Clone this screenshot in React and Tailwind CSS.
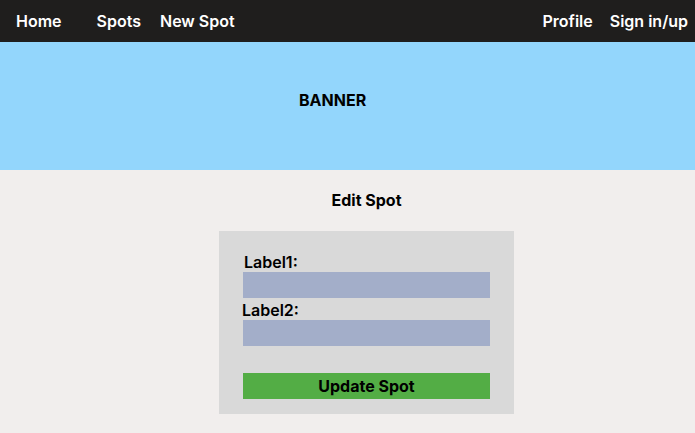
import React from 'react';

const App = () => {
  return (
    <div className="min-h-[433px] bg-[#f1eeed] font-['Inter',sans-serif] text-black">
      <nav className="h-[42px] bg-[#1f1e1d] flex items-center justify-between px-4 text-white font-semibold text-base">
        <div className="flex items-center">
          <a className="mr-[35px]">Home</a>
          <a className="mr-[19px]">Spots</a>
          <a>New Spot</a>
        </div>
        <div className="flex items-center gap-[17px] mr-[-9px]">
          <a>Profile</a>
          <a>Sign in/up</a>
        </div>
      </nav>

      <div className="h-[128px] bg-[#93d6fc] pt-[48px] pl-[299px]">
        <h2 className="font-bold text-base leading-[20px]">BANNER</h2>
      </div>

      <main className="pl-[38px] flex flex-col items-center">
        <h1 className="mt-[20px] font-bold text-base leading-[20px]">Edit Spot</h1>
        <form className="mt-[21px] w-[295px] h-[183px] bg-[#d9d9d9] px-[24px] pt-[21px]">
          <label className="block font-semibold text-base leading-[20px] pl-[1px]">Label1:</label>
          <div className="h-[26px] bg-[#a3aec9]" />
          <label className="block font-semibold text-base leading-[20px] mt-[2px] -ml-[1px]">Label2:</label>
          <div className="h-[26px] bg-[#a3aec9]" />
          <button type="button" className="mt-[27px] w-full h-[26px] bg-[#53ad45] font-bold text-base">
            Update Spot
          </button>
        </form>
      </main>
    </div>
  );
};

export default App;
